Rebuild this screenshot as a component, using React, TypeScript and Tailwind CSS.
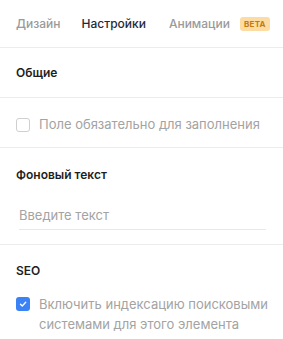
import React from "react";

export default function App() {
  return (
    <div className="w-[283px] h-[339px] bg-white overflow-hidden" style={{ fontFamily: "Inter, 'Noto Sans', sans-serif" }}>
      {/* Tabs */}
      <div className="h-[48px] flex items-center px-4 border-b border-[#ececec]">
        <span className="text-[12px] font-medium text-[#9a9a9a]">Дизайн</span>
        <span className="ml-[21px] text-[12px] font-medium text-[#1e2a3b]">Настройки</span>
        <span className="ml-[23px] text-[12px] font-medium text-[#9a9a9a]">Анимации</span>
        <span className="ml-[10px] h-[14px] px-[4px] rounded-[3px] bg-[#fddca4] text-[#c47a10] text-[8px] font-bold leading-[14px] tracking-[0.3px]">BETA</span>
      </div>

      {/* Общие */}
      <div className="h-[50px] flex items-center px-4 border-b border-[#ececec]">
        <span className="text-[12px] font-semibold text-[#1f1f1f]">Общие</span>
      </div>
      <div className="h-[50px] flex items-center px-4 pt-[4px] border-b border-[#ececec]">
        <span className="w-[14px] h-[14px] rounded-[3px] border border-[#cfcfcf] bg-white shrink-0" />
        <span className="ml-[9px] text-[13px] text-[#a3a3a3] whitespace-nowrap">Поле обязательно для заполнения</span>
      </div>

      {/* Фоновый текст */}
      <div className="h-[97px] px-4 pt-[18px] border-b border-[#ececec]">
        <div className="text-[12px] font-semibold text-[#1f1f1f] leading-[18px]">Фоновый текст</div>
        <div className="mt-[19px] ml-[3px] mr-[1px] border-b border-[#e8e8e8] h-[27px] flex items-center">
          <span className="text-[13px] text-[#a3a3a3]">Введите текст</span>
        </div>
      </div>

      {/* SEO */}
      <div className="pl-4 pr-[8px] pt-[17px]">
        <div className="text-[12px] font-semibold text-[#1f1f1f] leading-[18px]">SEO</div>
        <div className="mt-[14px] flex items-start">
          <span className="mt-[3px] w-[14px] h-[14px] rounded-[3px] bg-[#3b82f6] shrink-0 flex items-center justify-center">
            <svg width="10" height="10" viewBox="0 0 10 10" fill="none">
              <path d="M2.5 5.2 L4.3 7 L7.7 3.2" stroke="white" strokeWidth="1.3" strokeLinecap="round" strokeLinejoin="round" />
            </svg>
          </span>
          <span className="ml-[9px] text-[13px] leading-[20px] text-[#a3a3a3]">
            Включить индексацию поисковыми<br />системами для этого элемента
          </span>
        </div>
      </div>
    </div>
  );
}
